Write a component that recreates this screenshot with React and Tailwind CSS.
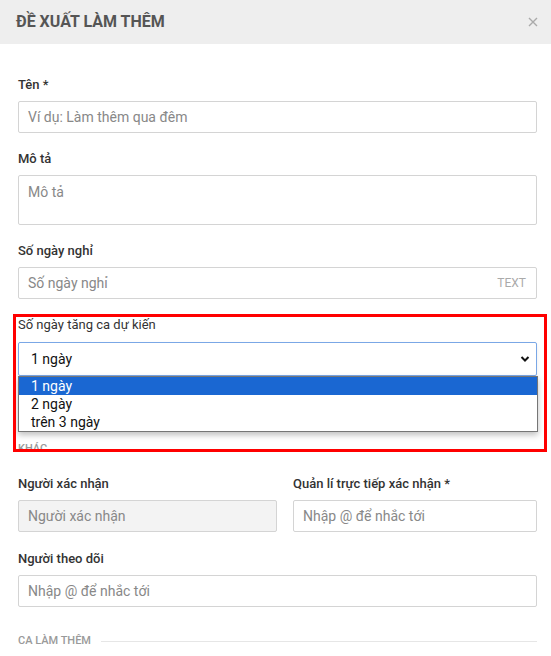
import React from "react";

function Label({ children, className = "" }) {
  return (
    <div className={`text-[13px] leading-[18px] font-medium text-[#333] mb-[7px] ${className}`}>
      {children}
    </div>
  );
}

function TextInput({ placeholder, disabled, suffix }) {
  return (
    <div
      className={`h-[32px] border border-[#d4d4d4] rounded-[2px] flex items-center px-[9px] ${
        disabled ? "bg-[#f3f3f3]" : "bg-white"
      }`}
    >
      <span className="flex-1 text-[14px] text-[#888]">{placeholder}</span>
      {suffix && <span className="text-[12px] text-[#aaa] mr-[1px]">{suffix}</span>}
    </div>
  );
}

function SectionTitle({ title, className = "" }) {
  return (
    <div className={`flex items-center gap-[10px] ${className}`}>
      <span className="text-[11px] leading-[16px] font-medium text-[#9a9a9a] uppercase">{title}</span>
      <div className="flex-1 h-px bg-[#e6e6e6]" />
    </div>
  );
}

export default function App() {
  const options = ["1 ngày", "2 ngày", "trên 3 ngày"];

  return (
    <div className="w-[551px] h-[656px] overflow-hidden bg-white font-['Roboto',sans-serif]">
      <div className="h-[44px] bg-[#eeeeee] flex items-center justify-between pl-[16px] pr-[13px]">
        <h1 className="text-[16px] font-bold text-[#555] uppercase">Đề xuất làm thêm</h1>
        <svg width="10" height="10" viewBox="0 0 10 10" className="text-[#aaa]">
          <path d="M1 1L9 9M9 1L1 9" stroke="currentColor" strokeWidth="1.4" />
        </svg>
      </div>

      <div className="pt-[32px] pl-[18px] pr-[14px]">
        <Label>Tên *</Label>
        <TextInput placeholder="Ví dụ: Làm thêm qua đêm" />

        <Label className="mt-[17px]">Mô tả</Label>
        <div className="h-[50px] border border-[#d4d4d4] rounded-[2px] px-[9px] pt-[6px] text-[14px] text-[#888]">
          Mô tả
        </div>

        <Label className="mt-[17px]">Số ngày nghỉ</Label>
        <TextInput placeholder="Số ngày nghỉ" suffix="TEXT" />

        <div className="relative mt-[17px]">
          <div className="text-[13px] leading-[18px] text-[#333] mb-[8px]">Số ngày tăng ca dự kiến</div>
          <div className="h-[34px] border border-[#7aa7e6] rounded-[2px] flex items-center justify-between pl-[12px] pr-[6px] shadow-[0_2px_4px_rgba(0,0,0,0.08)]">
            <span className="text-[14px] text-[#111]">1 ngày</span>
            <svg width="10" height="8" viewBox="0 0 10 8">
              <path d="M1.5 2L5 5.5L8.5 2" fill="none" stroke="#111" strokeWidth="2" />
            </svg>
          </div>
          <div className="absolute left-0 right-[-1px] top-full z-10 border border-[#767676] bg-white shadow-[0_3px_6px_rgba(0,0,0,0.25)]">
            {options.map((o, i) => (
              <div
                key={o}
                className={`h-[18px] leading-[18px] pl-[12px] text-[14px] ${
                  i === 0 ? "bg-[#1a67d2] text-white" : "text-[#111]"
                }`}
              >
                {o}
              </div>
            ))}
          </div>
          <div className="absolute left-[-5px] right-[-10px] top-[-2px] bottom-[-76px] border-[3px] border-[#ff0000] z-20 pointer-events-none" />
        </div>

        <SectionTitle title="Khác" className="mt-[65px]" />

        <div className="grid grid-cols-[259px_1fr] gap-x-[16px] mt-[18px]">
          <div>
            <Label>Người xác nhận</Label>
            <TextInput placeholder="Người xác nhận" disabled />
          </div>
          <div>
            <Label>Quản lí trực tiếp xác nhận *</Label>
            <TextInput placeholder="Nhập @ để nhắc tới" />
          </div>
        </div>

        <Label className="mt-[18px]">Người theo dõi</Label>
        <TextInput placeholder="Nhập @ để nhắc tới" />

        <SectionTitle title="Ca làm thêm" className="mt-[26px]" />
      </div>
    </div>
  );
}
